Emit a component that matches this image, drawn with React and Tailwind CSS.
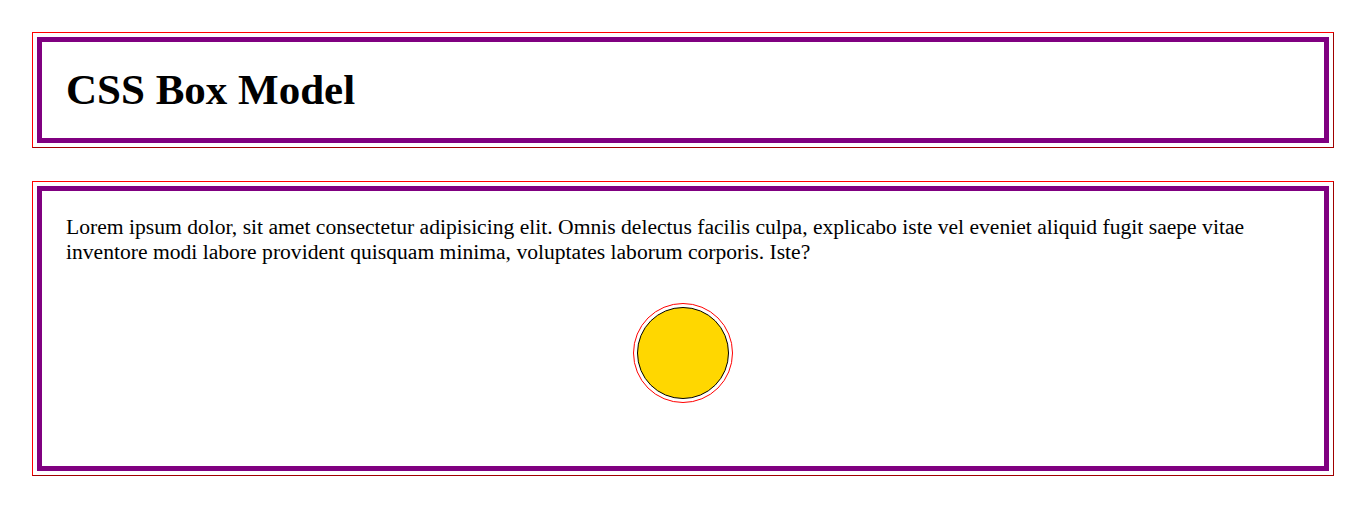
export default function App() {
  return (
    <div className="min-h-[510px] bg-white pl-8 pr-[31px] pt-8 font-['Liberation_Serif',serif] text-black">
      <div className="border border-t-[#ff0000] border-l-[#ff0000] border-b-[#a00000] border-r-[#a00000] p-1">
        <header className="border-[5px] border-[#800080] px-6 py-6">
          <h1 className="text-[43px] font-bold leading-[48px]">CSS Box Model</h1>
        </header>
      </div>
      <div className="mt-[33px] border border-t-[#ff0000] border-l-[#ff0000] border-b-[#a00000] border-r-[#a00000] p-1">
        <section className="flex h-[285px] flex-col border-[5px] border-[#800080] px-6 pt-6">
          <p className="text-[21.6px] leading-[25px]">
            Lorem ipsum dolor, sit amet consectetur adipisicing elit. Omnis delectus facilis culpa, explicabo iste vel eveniet aliquid fugit saepe vitae inventore modi labore provident quisquam minima, voluptates laborum corporis. Iste?
          </p>
          <div className="mt-[42px] flex justify-center">
            <div className="h-[92px] w-[92px] rounded-full border border-black bg-[#ffd700] outline outline-1 outline-offset-[3px] outline-[#ff0000]" />
          </div>
        </section>
      </div>
    </div>
  );
}
